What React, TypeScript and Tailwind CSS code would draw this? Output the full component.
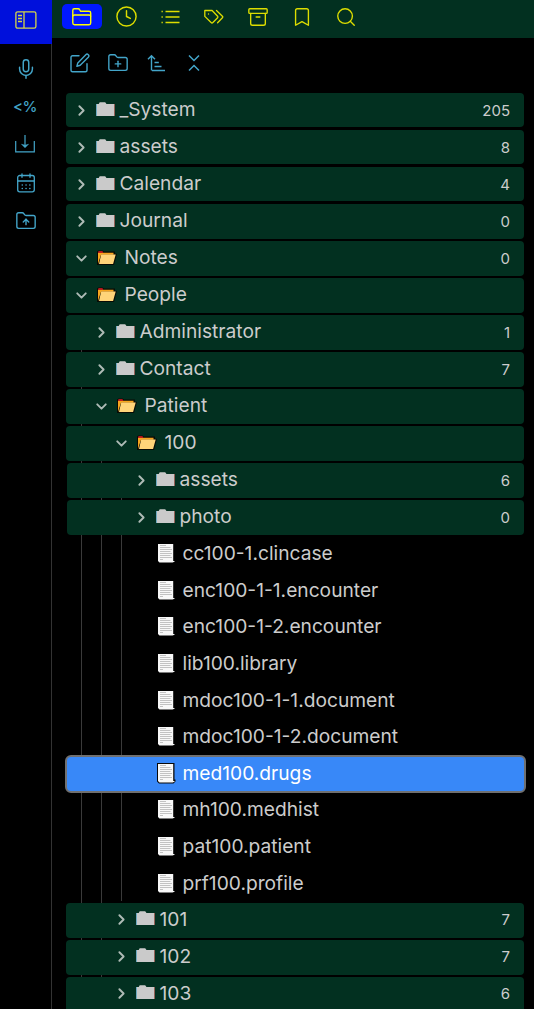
import type { ReactNode } from "react";
import {
  Archive,
  Bookmark,
  ChevronDown,
  ChevronRight,
  Clock,
  FolderPlus,
  FolderUp,
  Mic,
  Search,
} from "lucide-react";

function SidebarToggleIcon() {
  return (
    <svg width="22" height="18" viewBox="0 0 22 18" fill="none" stroke="currentColor" strokeWidth="1.3">
      <rect x="0.9" y="0.8" width="20" height="16.4" rx="1.8" />
      <path d="M9 1v16M3 4.5h4M3 7.5h4M3 10.500h4" />
    </svg>
  );
}

function FolderTabIcon() {
  return (
    <svg width="20" height="18" viewBox="0 0 20 18" fill="none" stroke="currentColor" strokeWidth="1.4" strokeLinejoin="round">
      <path d="M.8 15V2.300C.8 1.400 1.400.8 2.300.8h4c.6 0 1 .3 1.300.8l1.100 1.700h8.300c1 0 1.700.6 1.700 1.600V15c0 1-.6 1.700-1.600 1.700H2.500C1.500 16.700.8 16 .8 15Z" />
      <path d="M.8 8.500c0-1 .6-1.500 1.500-1.500h14.900c1 0 1.500.5 1.500 1.500" />
    </svg>
  );
}

function ListIcon() {
  return (
    <svg width="19" height="14" viewBox="0 0 19 14" fill="none" stroke="currentColor" strokeWidth="1.300">
      <path d="M4.500 1.500h14M4.500 7h14M4.500 12.500h14" />
      <path d="M.5 1.500h1.300M.5 7h1.300M.5 12.500h1.300" />
    </svg>
  );
}

function TagsIcon() {
  return (
    <svg width="20" height="16" viewBox="0 0 20 16" fill="none" stroke="currentColor" strokeWidth="1.3" strokeLinecap="round" strokeLinejoin="round">
      <path d="M.8 1.500h7.300l5.500 5.700c.5.5.5 1 0 1.500L8.900 13.500c-.6.6-1.200.6-1.800 0L.8 7.400V1.500Z" />
      <path d="M12.500 1.500 18.400 7.200c.5.5.5 1 0 1.500l-4.800 5" />
      <circle cx="4.500" cy="5" r=".7" fill="currentColor" stroke="none" />
    </svg>
  );
}

function EditIcon() {
  return (
    <svg width="20" height="20" viewBox="0 0 20 20" fill="none" stroke="currentColor" strokeWidth="1.400" strokeLinecap="round" strokeLinejoin="round">
      <path d="M9 2.800H2.500c-.9 0-1.500.6-1.500 1.500v13c0 .9.6 1.500 1.500 1.500h13c.9 0 1.500-.6 1.500-1.500v-6.500" />
      <path d="M15.800 1.700a1.700 1.700 0 0 1 2.500 2.500L10.200 12.300l-3.300.9.900-3.300Z" />
    </svg>
  );
}

function SortIcon() {
  return (
    <svg width="18" height="18" viewBox="0 0 18 18" fill="none" stroke="currentColor" strokeWidth="1.400">
      <path d="M4.500 16.500V2M1 5.200 4.500 1.800 8 5.200M7.500 8.500h4.300M7.500 12.500h7M5 16.500h13" />
    </svg>
  );
}

function CollapseIcon() {
  return (
    <svg width="12" height="18" viewBox="0 0 12 18" fill="none" stroke="currentColor" strokeWidth="1.500">
      <path d="m1 1.500 5 5 5-5M1 16.500l5-5 5 5" />
    </svg>
  );
}

function DownloadIcon() {
  return (
    <svg width="20" height="19" viewBox="0 0 20 19" fill="none" stroke="currentColor" strokeWidth="1.200">
      <path d="M.7 7v10.800h18.600V7M10 1v11.500" />
      <path d="M6.500 10.200 10 13.800l3.500-3.600-3.500 1Z" fill="currentColor" strokeWidth=".5" />
    </svg>
  );
}

function CalendarIcon() {
  return (
    <svg width="20" height="20" viewBox="0 0 20 20" fill="none" stroke="currentColor" strokeWidth="1.300" strokeLinecap="round">
      <rect x="1.700" y="2.500" width="16.600" height="16.300" rx="2" />
      <path d="M1.700 8h16.600M6 .8v3.500M14 .8v3.500" />
      <path d="M6.200 12h.1M10 12h.1M13.800 12h.1M6.200 15.500h.1M10 15.500h.1M13.800 15.500h.1" strokeWidth="1.500" />
    </svg>
  );
}

function ClosedFolder() {
  return (
    <svg width="19" height="15" viewBox="0 0 19 15" className="shrink-0">
      <path d="M0 2h2.700L3.700.3h5.500L10.500 2H19v12H0Z" fill="#cacaca" />
      <path d="M.4 2v12" stroke="#499dbd" strokeWidth=".8" />
      <path d="M18.600 2v12" stroke="#7d392b" strokeWidth=".8" />
    </svg>
  );
}

function OpenFolder() {
  return (
    <svg width="22" height="16" viewBox="0 0 22 16" className="shrink-0">
      <path d="M1 1.500 2.500.500h4L8 1.500h11v2.200h2L18 15H1Z" fill="#080b05" />
      <path d="M2 2.700h15.500v2H5L2 14Z" fill="#f7a51d" />
      <path d="M2.500 1.300h4l.8 1.500H2Z" fill="#e81b23" />
      <path d="M5.200 4.500h14.500L17.100 14H3Z" fill="#ffd479" />
    </svg>
  );
}

function PageIcon({ outlined }: { outlined?: boolean }) {
  return (
    <svg width="20" height="22" viewBox="0 0 20 22" className="shrink-0">
      {outlined && <path d="M1 1h17.500v16.500h1v2L17.500 21.500H3l-2-2Z" fill="#080808" />}
      <path d="M2 2h15.200v17h1.300v.7l-2 .8H3.500L2 19Z" fill="#f8f8f8" />
      <path d="M4 3.500h6M4 5.500h10.500M4 7.500h12M4 9.500h10.500M4 11.500h12M4 13.500h10.500M4 15.500h12M4 17.500h3" stroke="#c2c2c2" strokeWidth="1" />
    </svg>
  );
}

const indents = ["pl-2", "pl-7", "pl-12", "pl-[67px]"];

type FolderRowProps = {
  name: string;
  count?: number;
  depth?: number;
  open?: boolean;
  short?: boolean;
  inset?: boolean;
};

function FolderRow({ name, count, depth = 0, open, short, inset }: FolderRowProps) {
  return (
    <div
      className={`relative flex items-center rounded-[4px] bg-[#023020] pr-[14px] ${
        short ? "mb-[3px] h-[34px]" : "mb-[2px] h-[35px] pb-px"
      } ${inset ? "ml-px" : ""} ${indents[depth]}`}
    >
      <span className="flex w-[14px] shrink-0 justify-center">
        {open ? (
          <ChevronDown size={17} strokeWidth={2.700} className="shrink-0 text-[#afbbb6]" />
        ) : (
          <ChevronRight size={17} strokeWidth={2.700} className="shrink-0 text-[#afbbb6]" />
        )}
      </span>
      <span className={open ? "ml-2 pb-px" : "ml-2 pb-[2px]"}>{open ? <OpenFolder /> : <ClosedFolder />}</span>
      <span className={`grow pb-[2px] text-[19.200px] leading-6 ${open ? "ml-[6.500px]" : "ml-[4.500px]"}`}>{name}</span>
      {count !== undefined && <span className="pt-px text-[15px] leading-6">{count}</span>}
    </div>
  );
}

function FileRow({ name, selected }: { name: string; selected?: boolean }) {
  return (
    <div
      className={`relative flex items-center ${
        selected
          ? "-mt-[2px] -mr-0.5 -ml-px h-[38.600px] rounded-[6px] border-2 border-[#707070] bg-[#3888f8] pb-[2px] pl-[89px] text-white"
          : "h-[36.600px] pb-[4px] pl-[90px]"
      }`}
    >
      <PageIcon outlined={selected} />
      <span className="ml-[6.500px] text-[19.200px] leading-6">{name}</span>
    </div>
  );
}

function Branch({ line, children }: { line: string; children: ReactNode }) {
  return (
    <div className="relative">
      <div className={`absolute top-0 w-px bg-[#3a3a3a] ${line}`} />
      {children}
    </div>
  );
}

const files = [
  "cc100-1.clincase",
  "enc100-1-1.encounter",
  "enc100-1-2.encounter",
  "lib100.library",
  "mdoc100-1-1.document",
  "mdoc100-1-2.document",
  "med100.drugs",
  "mh100.medhist",
  "pat100.patient",
  "prf100.profile",
];

export default function App() {
  return (
    <div className="flex h-[1009px] w-[534px] overflow-hidden bg-black font-['Inter',sans-serif] text-[#cccccc]">
      <aside className="flex w-[52px] shrink-0 flex-col items-center border-r border-[#333333] pr-px text-[#43a5c9]">
        <div className="-mr-[2px] flex h-11 w-[52px] shrink-0 items-center justify-center bg-[#0010dc] pb-[5px] text-[#d5d548]">
          <SidebarToggleIcon />
        </div>
        <div className="flex h-12 items-center pt-px pl-px"><Mic size={22} strokeWidth={1.600} /></div>
        <div className="flex h-[30px] items-center pb-px text-[15px] font-medium leading-5 tracking-[-0.5px]">&lt;%</div>
        <div className="flex h-[45px] items-center pb-[2px]"><DownloadIcon /></div>
        <div className="flex h-8 items-center pb-px pl-px"><CalendarIcon /></div>
        <div className="flex h-[43px] items-center pl-px"><FolderUp size={22} strokeWidth={1.500} /></div>
      </aside>
      <main className="min-w-0 grow">
        <header className="flex h-[38px] items-start bg-[#023020] pt-1 pl-[10px] text-[#dddd00]">
          <div className="flex h-[25px] w-10 items-center justify-center rounded-[5px] bg-[#0018ff] text-[#ffff00]">
            <FolderTabIcon />
          </div>
          <div className="ml-1 flex h-[25px] w-10 items-center justify-center"><Clock size={23} strokeWidth={1.500} /></div>
          <div className="ml-1 flex h-[25px] w-10 items-center justify-center"><ListIcon /></div>
          <div className="ml-1 flex h-[25px] w-10 items-center justify-center"><TagsIcon /></div>
          <div className="ml-1 flex h-[25px] w-10 items-center justify-center"><Archive size={22} strokeWidth={1.500} /></div>
          <div className="ml-1 flex h-[25px] w-10 items-center justify-center"><Bookmark size={22} strokeWidth={1.500} /></div>
          <div className="ml-1 flex h-[25px] w-10 items-center justify-center"><Search size={22} strokeWidth={1.500} /></div>
        </header>
        <div className="flex h-[55px] items-center pb-[5px] pl-[9px] text-[#43a5c9]">
          <div className="flex w-[38px] justify-center"><EditIcon /></div>
          <div className="flex w-[38px] justify-center pb-px"><FolderPlus size={22} strokeWidth={1.500} /></div>
          <div className="flex w-[38px] justify-center"><SortIcon /></div>
          <div className="flex w-[38px] justify-center"><CollapseIcon /></div>
        </div>
        <div className="pr-[10px] pl-[14px]">
          <FolderRow name="_System" count={205} short />
          <FolderRow name="assets" count={8} short />
          <FolderRow name="Calendar" count={4} short />
          <FolderRow name="Journal" count={0} />
          <FolderRow name="Notes" count={0} open />
          <FolderRow name="People" open />
          <Branch line="left-[15px] bottom-0">
            <FolderRow name="Administrator" count={1} depth={1} />
            <FolderRow name="Contact" count={7} depth={1} />
            <FolderRow name="Patient" depth={1} open />
            <Branch line="left-[35px] bottom-0">
              <FolderRow name="100" depth={2} open />
              <Branch line="left-[55px] bottom-0.5">
                <FolderRow name="assets" count={6} depth={3} inset />
                <FolderRow name="photo" count={0} depth={3} inset />
                {files.map((name) => (
                  <FileRow key={name} name={name} selected={name === "med100.drugs"} />
                ))}
              </Branch>
              <FolderRow name="101" count={7} depth={2} />
              <FolderRow name="102" count={7} depth={2} />
              <FolderRow name="103" count={6} depth={2} />
            </Branch>
          </Branch>
        </div>
      </main>
    </div>
  );
}
